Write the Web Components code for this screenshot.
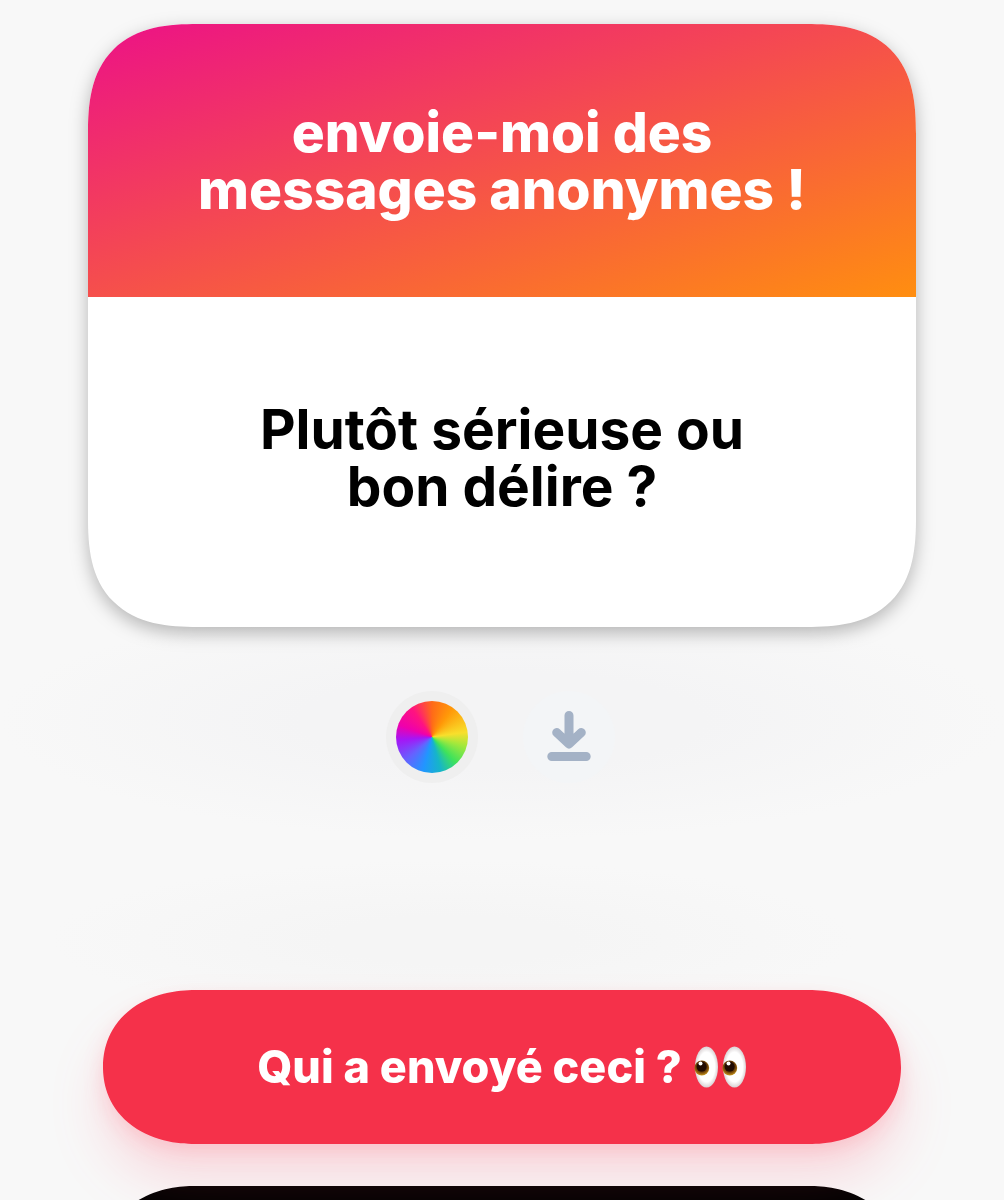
<!DOCTYPE html>
<html lang="fr">
<head>
<meta charset="utf-8">
<meta name="viewport" content="width=device-width, initial-scale=1">
<title>Messages anonymes</title>
<style>
  html, body { margin: 0; height: 100%; }
  body { overflow: hidden; background: #f8f8f8; font-family: Inter, "Liberation Sans", sans-serif; }
</style>
</head>
<body>
<message-screen>
  <message-card>
    <span slot="prompt">envoie-moi des<br>messages anonymes !</span>
    <span slot="message">Plutôt sérieuse ou<br>bon délire ?</span>
  </message-card>
  <card-tools slot="tools"></card-tools>
  <action-button slot="actions">Qui a envoyé ceci ? <eyes-icon></eyes-icon></action-button>
  <action-button slot="actions" tone="dark" label="Répondre"></action-button>
</message-screen>

<script>
const define = (name, html, setup) => {
  const template = document.createElement('template');
  template.innerHTML = html;
  customElements.define(name, class extends HTMLElement {
    connectedCallback() {
      if (this.shadowRoot) return;
      const root = this.attachShadow({ mode: 'open' });
      root.append(template.content.cloneNode(true));
      if (setup) setup(this, root);
    }
  });
};

define('message-screen', `
  <style>
    :host { display: block; height: 100vh; overflow: hidden;
      background:
        radial-gradient(ellipse 50% 120px at 50% 720px, #f4f4f5 40%, transparent),
        radial-gradient(ellipse 40% 80px at 45% 940px, #f5f5f5 30%, transparent),
        #f8f8f8; }
    main { display: flex; flex-direction: column; padding: 24px 88px 0; }
    .tools { margin-top: 64px; }
    .actions { display: flex; flex-direction: column; gap: 42px; margin-top: 207px; padding: 0 15px; }
  </style>
  <main>
    <slot></slot>
    <div class="tools"><slot name="tools"></slot></div>
    <div class="actions"><slot name="actions"></slot></div>
  </main>`);

define('message-card', `
  <style>
    :host { display: block; filter: drop-shadow(0 6px 9px rgba(0,0,0,.27)); }
    article { overflow: hidden; border-radius: 88px; background: #fff; text-align: center; }
    @supports (corner-shape: superellipse(1.5)) {
      article { border-radius: 110px; corner-shape: superellipse(1.4); }
    }
    h1, p { margin: 0; font-size: 55px; line-height: 57px; }
    h1 { padding: 80px 24px 79px; color: #fff; font-weight: 800;
      background: linear-gradient(to bottom right, #ec1187, #ff8e10); }
    p { padding: 104px 24px 112px; color: #000; font-weight: 700; }
  </style>
  <article>
    <h1><slot name="prompt"></slot></h1>
    <p><slot name="message"></slot></p>
  </article>`);

define('card-tools', `
  <style>
    :host { display: flex; justify-content: center; gap: 45px; padding-right: 3px; }
    button { display: grid; place-items: center; width: 92px; height: 92px; padding: 0;
      border: 0; border-radius: 50%; background: #efefef; }
    .save { background: #f3f5f7; }
    .wheel { width: 72px; height: 72px; border-radius: 50%;
      background: conic-gradient(#ff6a18, #ff9808 35deg, #f8df2c 82deg, #a5e83b 105deg, #3fe25b 137deg, #16b5c8 165deg, #2196ff 195deg, #6562ff 228deg, #a516f5 265deg, #ee00ad 290deg, #ff1380 325deg, #ff6a18); }
  </style>
  <button type="button" aria-label="Couleur"><span class="wheel"></span></button>
  <button type="button" class="save" aria-label="Télécharger">
    <svg width="44" height="52" viewBox="0 0 44 52" fill="none" stroke="#a4b2c6" stroke-width="9" stroke-linecap="round" stroke-linejoin="round">
      <path d="M22 4.5V32M9.7 21.5 22 33 34.3 21.5M4.8 45.5H39.2"/>
    </svg>
  </button>`);

define('action-button', `
  <style>
    :host { display: block; filter: drop-shadow(0 8px 10px rgba(255,60,90,.16)) drop-shadow(0 36px 26px rgba(255,70,100,.16)); }
    :host([tone="dark"]) { filter: none; }
    button { display: flex; align-items: center; justify-content: center; gap: 12px;
      width: 100%; height: 154px; padding: 0 24px; border: 0; border-radius: 77px;
      background: #f5314a; color: #fff; font: inherit; font-size: 45px; line-height: 56px; font-weight: 800; }
    :host([tone="dark"]) button { background: #000; }
    @supports (corner-shape: superellipse(1.2)) {
      button { border-radius: 92px / 77px; corner-shape: superellipse(1.1); }
    }
  </style>
  <button type="button"><slot></slot></button>`, (host, root) => {
    const label = host.getAttribute('label');
    if (label) root.querySelector('button').setAttribute('aria-label', label);
  });

define('eyes-icon', `
  <style>
    :host { display: block; }
    svg { display: block; }
  </style>
  <svg width="53" height="42" viewBox="0 0 53 42" aria-hidden="true">
    <defs>
      <radialGradient id="w"><stop offset=".72" stop-color="#fff"/><stop offset="1" stop-color="#d9d2d4"/></radialGradient>
      <radialGradient id="i" cx=".5" cy=".4" r=".6"><stop offset=".5" stop-color="#4a2505"/><stop offset=".75" stop-color="#89570c"/><stop offset="1" stop-color="#c99820"/></radialGradient>
    </defs>
    <g id="eye">
      <ellipse cx="12.5" cy="21" rx="11.5" ry="20.5" fill="url(#w)"/>
      <circle cx="7.8" cy="22" r="7.4" fill="url(#i)"/>
      <circle cx="7.6" cy="20.7" r="4.9" fill="#210b02"/>
      <circle cx="6.5" cy="17.5" r="2" fill="#fff"/>
    </g>
    <use href="#eye" x="28"/>
  </svg>`);
</script>
</body>
</html>
